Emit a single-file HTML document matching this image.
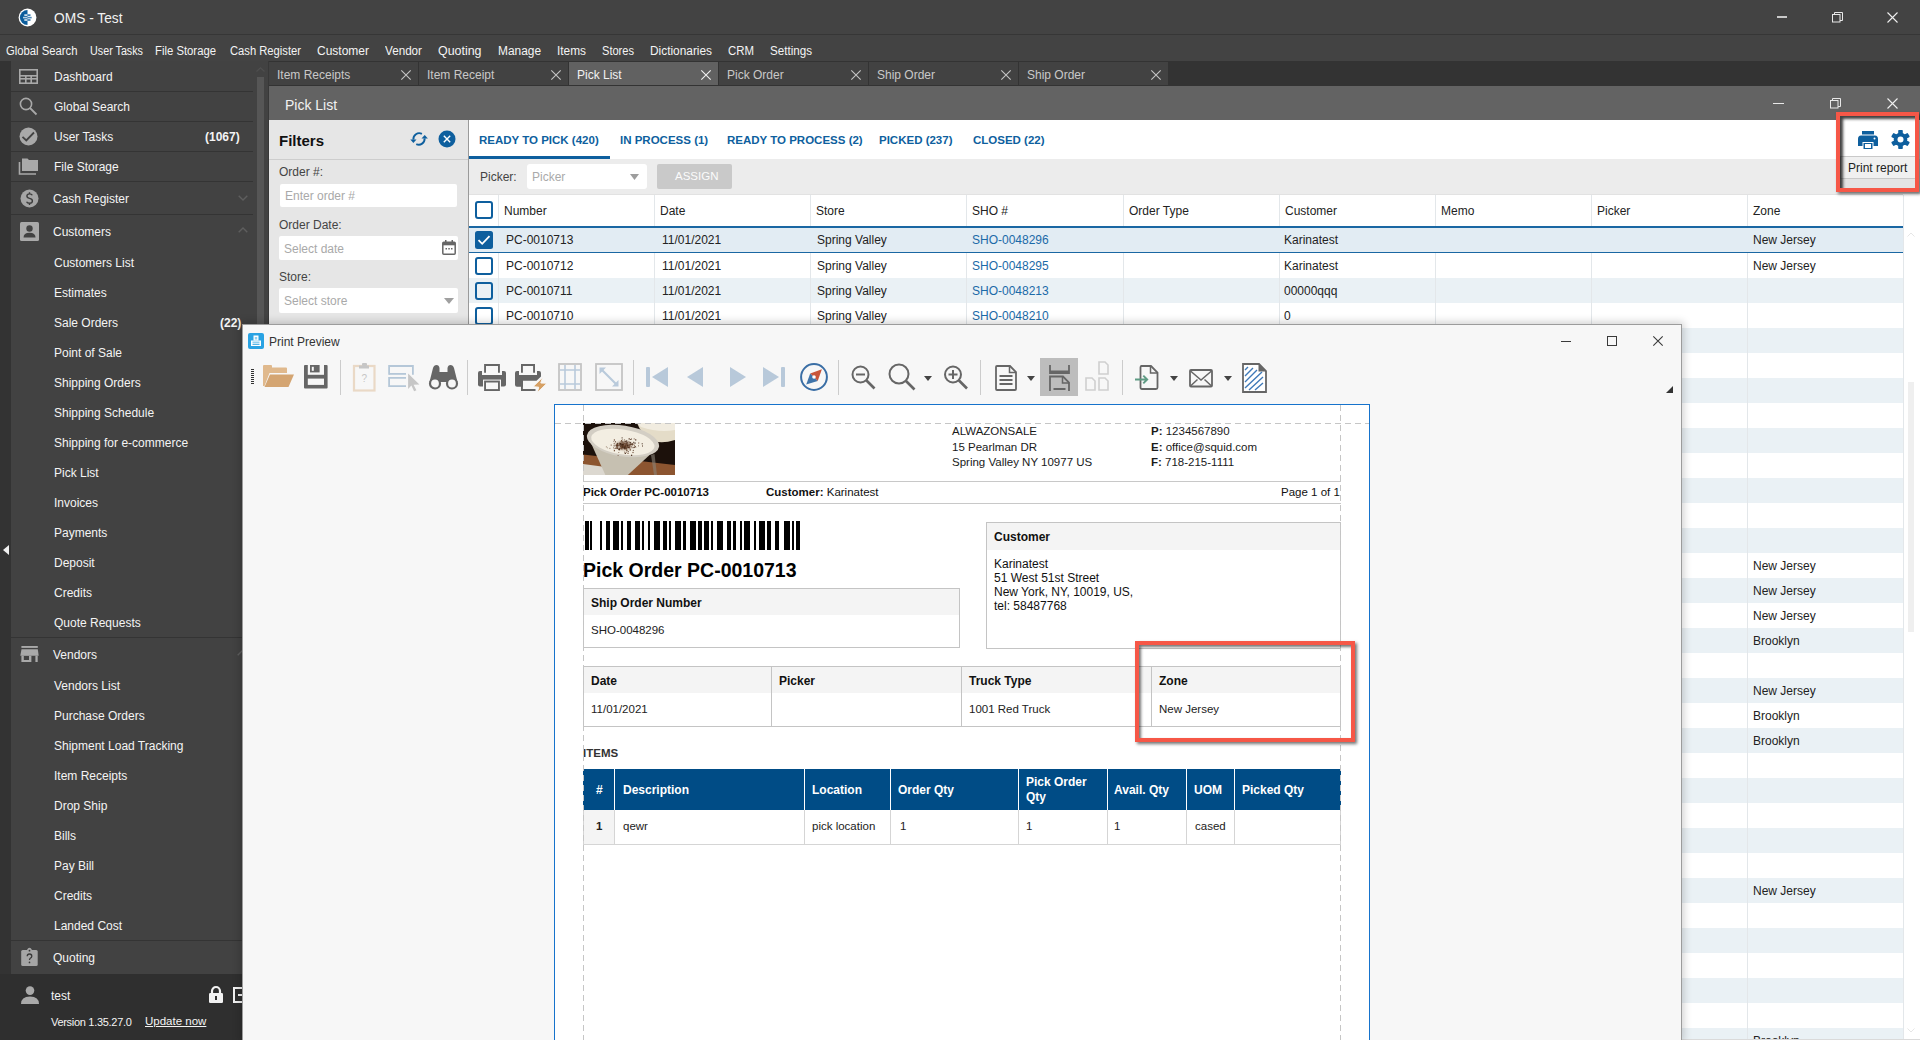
<!DOCTYPE html>
<html><head><meta charset="utf-8"><title>OMS - Test</title>
<style>
*{box-sizing:border-box;margin:0;padding:0}
html,body{width:1920px;height:1040px;overflow:hidden;background:#434343;font-family:"Liberation Sans",sans-serif;}
.a{position:absolute;white-space:nowrap}
.t{position:absolute;white-space:nowrap;line-height:1;transform-origin:0 0}
svg{position:absolute;overflow:visible}
</style></head><body>
<div class="a" style="left:0px;top:0px;width:1920px;height:34px;background:#434343;"></div>
<div class="a" style="left:0px;top:34px;width:1920px;height:1px;background:#363636;"></div>
<div class="a" style="left:0px;top:35px;width:1920px;height:26px;background:#434343;"></div>
<svg style="left:17.5px;top:7.5px" width="19" height="19" viewBox="0 0 19 19">
<circle cx="9.5" cy="9.5" r="8.9" fill="#fff"/>
<path d="M9.5 1.9 A7.6 7.6 0 0 0 9.5 17.1 Z" fill="#0b5d9c"/>
<rect x="6.3" y="6.4" width="3.2" height="1.4" fill="#fff"/><rect x="9.5" y="6.4" width="3" height="1.4" fill="#0b5d9c"/>
<rect x="5" y="8.8" width="4.5" height="1.6" fill="#b8d0e2"/><rect x="9.5" y="8.8" width="4.2" height="1.6" fill="#4a88b8"/>
<rect x="6.3" y="11.3" width="3.2" height="1.4" fill="#fff"/><rect x="9.5" y="11.3" width="3" height="1.4" fill="#0b5d9c"/>
</svg>
<div class="t" style="left:54px;top:11.2px;font-size:14.5px;color:#f2f2f2;font-weight:normal;transform:scaleX(0.9482);">OMS - Test</div>
<div class="a" style="left:1777px;top:16px;width:10px;height:2px;background:#c9c9c9;"></div>
<svg style="left:1832px;top:12px" width="11" height="11" viewBox="0 0 11 11"><rect x="0.5" y="2.5" width="7.5" height="7.5" fill="none" stroke="#e8e8e8"/><path d="M2.5 2.5V0.5H10.5V8.5H8" fill="none" stroke="#e8e8e8"/></svg>
<svg style="left:1887px;top:12px" width="11" height="11" viewBox="0 0 11 11"><path d="M0.5 0.5L10.5 10.5M10.5 0.5L0.5 10.5" stroke="#f0f0f0" stroke-width="1.1"/></svg>
<div class="t" style="left:6px;top:45.3px;font-size:12px;color:#f4f4f4;font-weight:normal;transform:scaleX(0.9403);">Global Search</div>
<div class="t" style="left:90px;top:45.3px;font-size:12px;color:#f4f4f4;font-weight:normal;transform:scaleX(0.8964);">User Tasks</div>
<div class="t" style="left:155px;top:45.3px;font-size:12px;color:#f4f4f4;font-weight:normal;transform:scaleX(0.9429);">File Storage</div>
<div class="t" style="left:230px;top:45.3px;font-size:12px;color:#f4f4f4;font-weight:normal;transform:scaleX(0.9339);">Cash Register</div>
<div class="t" style="left:317px;top:45.3px;font-size:12px;color:#f4f4f4;font-weight:normal;transform:scaleX(0.9998);">Customer</div>
<div class="t" style="left:385px;top:45.3px;font-size:12px;color:#f4f4f4;font-weight:normal;transform:scaleX(0.9729);">Vendor</div>
<div class="t" style="left:438px;top:45.3px;font-size:12px;color:#f4f4f4;font-weight:normal;transform:scaleX(1.0351);">Quoting</div>
<div class="t" style="left:498px;top:45.3px;font-size:12px;color:#f4f4f4;font-weight:normal;transform:scaleX(0.9917);">Manage</div>
<div class="t" style="left:557px;top:45.3px;font-size:12px;color:#f4f4f4;font-weight:normal;transform:scaleX(0.9885);">Items</div>
<div class="t" style="left:602px;top:45.3px;font-size:12px;color:#f4f4f4;font-weight:normal;transform:scaleX(0.9227);">Stores</div>
<div class="t" style="left:650px;top:45.3px;font-size:12px;color:#f4f4f4;font-weight:normal;transform:scaleX(0.9890);">Dictionaries</div>
<div class="t" style="left:728px;top:45.3px;font-size:12px;color:#f4f4f4;font-weight:normal;transform:scaleX(0.9514);">CRM</div>
<div class="t" style="left:770px;top:45.3px;font-size:12px;color:#f4f4f4;font-weight:normal;transform:scaleX(0.9687);">Settings</div>
<div class="a" style="left:0px;top:61px;width:269px;height:979px;background:#424242;"></div>
<div class="a" style="left:0px;top:61px;width:11px;height:979px;background:#333333;"></div>
<div class="a" style="left:257px;top:61px;width:11px;height:913px;background:#424242;"></div>
<div class="a" style="left:268px;top:61px;width:1px;height:979px;background:#383838;"></div>
<div class="a" style="left:257px;top:77px;width:7px;height:900px;background:#565656;"></div>
<svg style="left:256px;top:67px" width="9" height="5" viewBox="0 0 9 5"><path d="M0.5 4.5L4.5 0.8L8.5 4.5" fill="none" stroke="#4f4f4f" stroke-width="1.2"/></svg>
<div class="a" style="left:11px;top:91px;width:242px;height:1px;background:#343434;"></div>
<div class="a" style="left:11px;top:121px;width:242px;height:1px;background:#343434;"></div>
<div class="a" style="left:11px;top:151px;width:242px;height:1px;background:#343434;"></div>
<div class="a" style="left:11px;top:181px;width:242px;height:1px;background:#343434;"></div>
<div class="a" style="left:11px;top:214px;width:242px;height:1px;background:#343434;"></div>
<div class="a" style="left:11px;top:637px;width:242px;height:1px;background:#343434;"></div>
<div class="a" style="left:11px;top:940px;width:242px;height:1px;background:#343434;"></div>
<div class="t" style="left:54px;top:70.8px;font-size:12px;color:#f4f4f4;font-weight:normal;">Dashboard</div>
<div class="t" style="left:54px;top:100.8px;font-size:12px;color:#f4f4f4;font-weight:normal;">Global Search</div>
<div class="t" style="left:54px;top:130.8px;font-size:12px;color:#f4f4f4;font-weight:normal;">User Tasks</div>
<div class="t" style="left:54px;top:160.8px;font-size:12px;color:#f4f4f4;font-weight:normal;">File Storage</div>
<div class="t" style="left:53px;top:192.8px;font-size:12px;color:#f4f4f4;font-weight:normal;">Cash Register</div>
<div class="t" style="left:53px;top:225.8px;font-size:12px;color:#f4f4f4;font-weight:normal;">Customers</div>
<div class="t" style="left:53px;top:648.8px;font-size:12px;color:#f4f4f4;font-weight:normal;">Vendors</div>
<div class="t" style="left:53px;top:951.8px;font-size:12px;color:#f4f4f4;font-weight:normal;">Quoting</div>
<div class="t" style="left:205px;top:130.8px;font-size:12px;color:#f4f4f4;font-weight:bold;">(1067)</div>
<div class="t" style="left:54px;top:256.8px;font-size:12px;color:#f4f4f4;font-weight:normal;">Customers List</div>
<div class="t" style="left:54px;top:286.8px;font-size:12px;color:#f4f4f4;font-weight:normal;">Estimates</div>
<div class="t" style="left:54px;top:316.8px;font-size:12px;color:#f4f4f4;font-weight:normal;">Sale Orders</div>
<div class="t" style="left:54px;top:346.8px;font-size:12px;color:#f4f4f4;font-weight:normal;">Point of Sale</div>
<div class="t" style="left:54px;top:376.8px;font-size:12px;color:#f4f4f4;font-weight:normal;">Shipping Orders</div>
<div class="t" style="left:54px;top:406.8px;font-size:12px;color:#f4f4f4;font-weight:normal;">Shipping Schedule</div>
<div class="t" style="left:54px;top:436.8px;font-size:12px;color:#f4f4f4;font-weight:normal;">Shipping for e-commerce</div>
<div class="t" style="left:54px;top:466.8px;font-size:12px;color:#f4f4f4;font-weight:normal;">Pick List</div>
<div class="t" style="left:54px;top:496.8px;font-size:12px;color:#f4f4f4;font-weight:normal;">Invoices</div>
<div class="t" style="left:54px;top:526.8px;font-size:12px;color:#f4f4f4;font-weight:normal;">Payments</div>
<div class="t" style="left:54px;top:556.8px;font-size:12px;color:#f4f4f4;font-weight:normal;">Deposit</div>
<div class="t" style="left:54px;top:586.8px;font-size:12px;color:#f4f4f4;font-weight:normal;">Credits</div>
<div class="t" style="left:54px;top:616.8px;font-size:12px;color:#f4f4f4;font-weight:normal;">Quote Requests</div>
<div class="t" style="left:220px;top:316.8px;font-size:12px;color:#f4f4f4;font-weight:bold;">(22)</div>
<div class="t" style="left:54px;top:679.8px;font-size:12px;color:#f4f4f4;font-weight:normal;">Vendors List</div>
<div class="t" style="left:54px;top:709.8px;font-size:12px;color:#f4f4f4;font-weight:normal;">Purchase Orders</div>
<div class="t" style="left:54px;top:739.8px;font-size:12px;color:#f4f4f4;font-weight:normal;">Shipment Load Tracking</div>
<div class="t" style="left:54px;top:769.8px;font-size:12px;color:#f4f4f4;font-weight:normal;">Item Receipts</div>
<div class="t" style="left:54px;top:799.8px;font-size:12px;color:#f4f4f4;font-weight:normal;">Drop Ship</div>
<div class="t" style="left:54px;top:829.8px;font-size:12px;color:#f4f4f4;font-weight:normal;">Bills</div>
<div class="t" style="left:54px;top:859.8px;font-size:12px;color:#f4f4f4;font-weight:normal;">Pay Bill</div>
<div class="t" style="left:54px;top:889.8px;font-size:12px;color:#f4f4f4;font-weight:normal;">Credits</div>
<div class="t" style="left:54px;top:919.8px;font-size:12px;color:#f4f4f4;font-weight:normal;">Landed Cost</div>
<svg style="left:19px;top:69px" width="19" height="15" viewBox="0 0 19 15"><rect x="0.8" y="0.8" width="17.4" height="13.4" fill="none" stroke="#a9a9a9" stroke-width="1.6"/><rect x="0" y="6" width="19" height="1.6" fill="#a9a9a9"/><rect x="6" y="7" width="1.6" height="7" fill="#a9a9a9"/><rect x="11.4" y="7" width="1.6" height="7" fill="#a9a9a9"/><rect x="0" y="9" width="19" height="1.6" fill="#a9a9a9"/></svg>
<svg style="left:19px;top:97px" width="19" height="19" viewBox="0 0 19 19"><circle cx="7" cy="7" r="5.6" fill="none" stroke="#a9a9a9" stroke-width="1.6"/><path d="M11 11L17.5 17.5" stroke="#a9a9a9" stroke-width="1.8"/></svg>
<svg style="left:19px;top:127px" width="19" height="19" viewBox="0 0 19 19"><circle cx="9.5" cy="9.5" r="9" fill="#a9a9a9"/><path d="M3.5 9.8L7.3 13.4L15 5.5" fill="none" stroke="#424242" stroke-width="1.8"/></svg>
<svg style="left:19px;top:158px" width="20" height="17" viewBox="0 0 20 17"><path d="M3 0.5H8.5L10 2H19V13H3Z" fill="#a9a9a9"/><path d="M0.5 4V16H17" fill="none" stroke="#a9a9a9" stroke-width="1.6"/></svg>
<svg style="left:20px;top:188.5px" width="19" height="19" viewBox="0 0 19 19"><circle cx="9.5" cy="9.5" r="9" fill="#a5a5a5"/><path d="M12.3 6.3Q11.6 4.9 9.5 4.9Q6.9 4.9 6.9 7.1Q6.9 8.9 9.5 9.4Q12.4 9.9 12.4 12Q12.4 14.2 9.5 14.2Q7.3 14.2 6.6 12.7M9.5 3.2V4.9M9.5 14.2V16" fill="none" stroke="#3c3c3c" stroke-width="1.4"/></svg>
<svg style="left:20px;top:222px" width="19" height="19" viewBox="0 0 19 19"><rect x="0" y="0" width="19" height="19" rx="1.5" fill="#a9a9a9"/><circle cx="9.5" cy="6.5" r="3.2" fill="#424242"/><path d="M3.5 15.5Q3.5 10.8 9.5 10.8Q15.5 10.8 15.5 15.5Z" fill="#424242"/></svg>
<svg style="left:238px;top:195px" width="10" height="6" viewBox="0 0 10 6"><path d="M0.7 0.7L5 5L9.3 0.7" fill="none" stroke="#5e5e5e" stroke-width="1.4"/></svg>
<svg style="left:238px;top:227px" width="10" height="6" viewBox="0 0 10 6"><path d="M0.7 5.3L5 1L9.3 5.3" fill="none" stroke="#5e5e5e" stroke-width="1.4"/></svg>
<svg style="left:20px;top:645px" width="19" height="18" viewBox="0 0 19 18"><rect x="1.4" y="1" width="16.4" height="1.9" fill="#a9a9a9"/><path d="M1.5 4.2H17.8L18.7 10.7H0.3Z" fill="#a9a9a9"/><rect x="1.4" y="10.7" width="10" height="6.3" fill="#a9a9a9"/><rect x="3.8" y="11" width="5.2" height="4" fill="#424242"/><rect x="15.4" y="10.7" width="2.3" height="6.3" fill="#a9a9a9"/></svg>
<svg style="left:237px;top:650px" width="10" height="6" viewBox="0 0 10 6"><path d="M0.7 5.3L5 1L9.3 5.3" fill="none" stroke="#5e5e5e" stroke-width="1.4"/></svg>
<svg style="left:21px;top:947px" width="17" height="19" viewBox="0 0 17 19"><rect x="0.2" y="2.9" width="16.5" height="16" rx="1.5" fill="#a5a5a5"/><path d="M5.8 3.2Q7.2 0.8 8.5 0.8Q9.8 0.8 11.2 3.2Z" fill="#a5a5a5"/><circle cx="8.5" cy="3.7" r="0.9" fill="#3a3a3a"/><path d="M6.2 9.3Q6.2 7 8.5 7Q10.8 7 10.8 9.2Q10.8 10.5 9.3 11.3Q8.5 11.8 8.5 13" fill="none" stroke="#3a3a3a" stroke-width="1.3"/><circle cx="8.5" cy="15.4" r="0.85" fill="#3a3a3a"/></svg>
<div class="a" style="left:0px;top:974px;width:269px;height:66px;background:#2f2f2f;"></div>
<svg style="left:21px;top:986px" width="18" height="18" viewBox="0 0 18 18"><circle cx="9" cy="4.6" r="4.3" fill="#a9a9a9"/><path d="M0 18Q0 10.5 9 10.5Q18 10.5 18 18Z" fill="#a9a9a9"/></svg>
<div class="t" style="left:51px;top:989.8px;font-size:12px;color:#f4f4f4;font-weight:normal;">test</div>
<svg style="left:209px;top:986px" width="14" height="17" viewBox="0 0 14 17"><path d="M3 7.5V5A4 4 0 0 1 11 5V7.5" fill="none" stroke="#f2f2f2" stroke-width="2.2"/><rect x="0" y="7" width="14" height="10" rx="1.2" fill="#f2f2f2"/><rect x="6" y="10" width="2" height="4" fill="#2f2f2f"/></svg>
<svg style="left:233px;top:987px" width="10" height="16" viewBox="0 0 10 16"><path d="M9 1H1V15H9" fill="none" stroke="#f2f2f2" stroke-width="2"/><rect x="5" y="7" width="5" height="2" fill="#f2f2f2"/></svg>
<div class="t" style="left:51px;top:1016.7px;font-size:11px;color:#f4f4f4;font-weight:normal;letter-spacing:-0.3px">Version 1.35.27.0</div>
<div class="t" style="left:145px;top:1016.3px;font-size:11.5px;color:#f4f4f4;font-weight:normal;text-decoration:underline">Update now</div>
<svg style="left:3px;top:545px" width="6" height="10" viewBox="0 0 6 10"><path d="M6 0V10L0 5Z" fill="#f0f0f0"/></svg>
<div class="a" style="left:269px;top:61px;width:1651px;height:25px;background:#333333;"></div>
<div class="a" style="left:269px;top:62px;width:149px;height:23px;background:#424242;"></div>
<div class="t" style="left:277px;top:69.3px;font-size:12px;color:#c9c9c9;font-weight:normal;">Item Receipts</div>
<svg style="left:401px;top:70px" width="10" height="10" viewBox="0 0 10 10"><path d="M0.3 0.3L9.7 9.7M9.7 0.3L0.3 9.7" stroke="#c4c4c4" stroke-width="1.1"/></svg>
<div class="a" style="left:419px;top:62px;width:149px;height:23px;background:#424242;"></div>
<div class="t" style="left:427px;top:69.3px;font-size:12px;color:#c9c9c9;font-weight:normal;">Item Receipt</div>
<svg style="left:551px;top:70px" width="10" height="10" viewBox="0 0 10 10"><path d="M0.3 0.3L9.7 9.7M9.7 0.3L0.3 9.7" stroke="#c4c4c4" stroke-width="1.1"/></svg>
<div class="a" style="left:569px;top:62px;width:149px;height:23px;background:#616161;"></div>
<div class="t" style="left:577px;top:69.3px;font-size:12px;color:#f2f2f2;font-weight:normal;">Pick List</div>
<svg style="left:701px;top:70px" width="10" height="10" viewBox="0 0 10 10"><path d="M0.3 0.3L9.7 9.7M9.7 0.3L0.3 9.7" stroke="#f0f0f0" stroke-width="1.1"/></svg>
<div class="a" style="left:719px;top:62px;width:149px;height:23px;background:#424242;"></div>
<div class="t" style="left:727px;top:69.3px;font-size:12px;color:#c9c9c9;font-weight:normal;">Pick Order</div>
<svg style="left:851px;top:70px" width="10" height="10" viewBox="0 0 10 10"><path d="M0.3 0.3L9.7 9.7M9.7 0.3L0.3 9.7" stroke="#c4c4c4" stroke-width="1.1"/></svg>
<div class="a" style="left:869px;top:62px;width:149px;height:23px;background:#424242;"></div>
<div class="t" style="left:877px;top:69.3px;font-size:12px;color:#c9c9c9;font-weight:normal;">Ship Order</div>
<svg style="left:1001px;top:70px" width="10" height="10" viewBox="0 0 10 10"><path d="M0.3 0.3L9.7 9.7M9.7 0.3L0.3 9.7" stroke="#c4c4c4" stroke-width="1.1"/></svg>
<div class="a" style="left:1019px;top:62px;width:149px;height:23px;background:#424242;"></div>
<div class="t" style="left:1027px;top:69.3px;font-size:12px;color:#c9c9c9;font-weight:normal;">Ship Order</div>
<svg style="left:1151px;top:70px" width="10" height="10" viewBox="0 0 10 10"><path d="M0.3 0.3L9.7 9.7M9.7 0.3L0.3 9.7" stroke="#c4c4c4" stroke-width="1.1"/></svg>
<div class="a" style="left:269px;top:86px;width:1651px;height:34px;background:#636363;"></div>
<div class="t" style="left:285px;top:98.1px;font-size:14px;color:#f2f2f2;font-weight:normal;">Pick List</div>
<div class="a" style="left:1773px;top:103px;width:11px;height:1.2px;background:#e8e8e8;"></div>
<svg style="left:1830px;top:98px" width="11" height="11" viewBox="0 0 11 11"><rect x="0.5" y="2.5" width="7.5" height="7.5" fill="none" stroke="#e8e8e8"/><path d="M2.5 2.5V0.5H10.5V8.5H8" fill="none" stroke="#e8e8e8"/></svg>
<svg style="left:1887px;top:98px" width="11" height="11" viewBox="0 0 11 11"><path d="M0.5 0.5L10.5 10.5M10.5 0.5L0.5 10.5" stroke="#f0f0f0" stroke-width="1.1"/></svg>
<div class="a" style="left:269px;top:120px;width:199px;height:920px;background:#e6e6e6;"></div>
<div class="a" style="left:468px;top:120px;width:1px;height:920px;background:#9a9a9a;"></div>
<div class="a" style="left:269px;top:159px;width:199px;height:1px;background:#cdcdcd;"></div>
<div class="t" style="left:279px;top:132.8px;font-size:15px;color:#111;font-weight:bold;">Filters</div>
<svg style="left:410px;top:131px" width="18" height="17" viewBox="0 0 18 17"><path d="M11.9 2.9A5.8 5.8 0 0 0 3.4 8.6" fill="none" stroke="#0e5f9e" stroke-width="1.9"/><path d="M0.3 8.6H6.5L3.4 12.1Z" fill="#0e5f9e"/><path d="M6.3 13.1A5.8 5.8 0 0 0 14.6 7.4" fill="none" stroke="#0e5f9e" stroke-width="1.9"/><path d="M11.5 7.4H17.9L14.7 3.9Z" fill="#0e5f9e"/></svg>
<svg style="left:438px;top:130px" width="18" height="18" viewBox="0 0 18 18"><circle cx="9" cy="9" r="8.5" fill="#0e5f9e"/><path d="M5.8 5.8L12.2 12.2M12.2 5.8L5.8 12.2" stroke="#fff" stroke-width="1.4"/></svg>
<div class="t" style="left:279px;top:165.8px;font-size:12px;color:#444;font-weight:normal;">Order #:</div>
<div class="a" style="left:280px;top:184px;width:177px;height:23px;background:#fff;border-radius:2px"></div>
<div class="t" style="left:285px;top:189.8px;font-size:12px;color:#a9a9a9;font-weight:normal;">Enter order #</div>
<div class="t" style="left:279px;top:218.8px;font-size:12px;color:#444;font-weight:normal;">Order Date:</div>
<div class="a" style="left:279px;top:236px;width:179px;height:24px;background:#fff;border-radius:2px"></div>
<div class="t" style="left:284px;top:242.8px;font-size:12px;color:#a9a9a9;font-weight:normal;">Select date</div>
<svg style="left:442px;top:240px" width="14" height="15" viewBox="0 0 14 15"><rect x="0.8" y="2.3" width="12.4" height="11.9" rx="1" fill="none" stroke="#666" stroke-width="1.5"/><rect x="0.8" y="2.3" width="12.4" height="3" fill="#666"/><rect x="3" y="0" width="1.5" height="3" fill="#666"/><rect x="9.5" y="0" width="1.5" height="3" fill="#666"/><rect x="3.5" y="8" width="1.5" height="1.5" fill="#666"/><rect x="6.3" y="8" width="1.5" height="1.5" fill="#666"/><rect x="9" y="8" width="1.5" height="1.5" fill="#666"/></svg>
<div class="t" style="left:279px;top:270.8px;font-size:12px;color:#444;font-weight:normal;">Store:</div>
<div class="a" style="left:279px;top:288px;width:179px;height:25px;background:#fff;border-radius:2px"></div>
<div class="t" style="left:284px;top:294.8px;font-size:12px;color:#a9a9a9;font-weight:normal;">Select store</div>
<svg style="left:444px;top:298px" width="10" height="6" viewBox="0 0 10 6"><path d="M0 0H10L5 6Z" fill="#a0a0a0"/></svg>
<div class="a" style="left:469px;top:120px;width:1451px;height:39px;background:#ffffff;"></div>
<div class="t" style="left:479px;top:134.8px;font-size:11.5px;color:#0e5f9e;font-weight:bold;">READY TO PICK (420)</div>
<div class="t" style="left:620px;top:134.8px;font-size:11.5px;color:#0e5f9e;font-weight:bold;">IN PROCESS (1)</div>
<div class="t" style="left:727px;top:134.8px;font-size:11.5px;color:#0e5f9e;font-weight:bold;">READY TO PROCESS (2)</div>
<div class="t" style="left:879px;top:134.8px;font-size:11.5px;color:#0e5f9e;font-weight:bold;">PICKED (237)</div>
<div class="t" style="left:973px;top:134.8px;font-size:11.5px;color:#0e5f9e;font-weight:bold;">CLOSED (22)</div>
<div class="a" style="left:469px;top:156px;width:141px;height:3px;background:#0e5f9e;"></div>
<div class="a" style="left:469px;top:159px;width:1451px;height:35px;background:#ececec;"></div>
<div class="t" style="left:480px;top:170.8px;font-size:12px;color:#444;font-weight:normal;">Picker:</div>
<div class="a" style="left:527px;top:164px;width:120px;height:25px;background:#fff;border-radius:3px"></div>
<div class="t" style="left:532px;top:170.8px;font-size:12px;color:#aaa;font-weight:normal;">Picker</div>
<svg style="left:630px;top:174px" width="9" height="6" viewBox="0 0 9 6"><path d="M0 0H9L4.5 6Z" fill="#9d9d9d"/></svg>
<div class="a" style="left:657px;top:164px;width:75px;height:25px;background:#c9c9c9;border-radius:2px"></div>
<div class="t" style="left:675px;top:171.3px;font-size:11.5px;color:#fbfbfb;font-weight:normal;">ASSIGN</div>
<div class="a" style="left:469px;top:194px;width:1451px;height:32px;background:#ffffff;"></div>
<div class="a" style="left:469px;top:194px;width:1434px;height:1px;background:#e2e2e2;"></div>
<div class="t" style="left:504px;top:204.8px;font-size:12px;color:#222;font-weight:normal;">Number</div>
<div class="t" style="left:660px;top:204.8px;font-size:12px;color:#222;font-weight:normal;">Date</div>
<div class="t" style="left:816px;top:204.8px;font-size:12px;color:#222;font-weight:normal;">Store</div>
<div class="t" style="left:972px;top:204.8px;font-size:12px;color:#222;font-weight:normal;">SHO #</div>
<div class="t" style="left:1129px;top:204.8px;font-size:12px;color:#222;font-weight:normal;">Order Type</div>
<div class="t" style="left:1285px;top:204.8px;font-size:12px;color:#222;font-weight:normal;">Customer</div>
<div class="t" style="left:1441px;top:204.8px;font-size:12px;color:#222;font-weight:normal;">Memo</div>
<div class="t" style="left:1597px;top:204.8px;font-size:12px;color:#222;font-weight:normal;">Picker</div>
<div class="t" style="left:1753px;top:204.8px;font-size:12px;color:#222;font-weight:normal;">Zone</div>
<div class="a" style="left:469px;top:226px;width:1451px;height:814px;background:#ffffff;"></div>
<div class="a" style="left:469px;top:278px;width:1434px;height:25px;background:#eaf1f5;"></div>
<div class="a" style="left:469px;top:328px;width:1434px;height:25px;background:#eaf1f5;"></div>
<div class="a" style="left:469px;top:378px;width:1434px;height:25px;background:#eaf1f5;"></div>
<div class="a" style="left:469px;top:428px;width:1434px;height:25px;background:#eaf1f5;"></div>
<div class="a" style="left:469px;top:478px;width:1434px;height:25px;background:#eaf1f5;"></div>
<div class="a" style="left:469px;top:528px;width:1434px;height:25px;background:#eaf1f5;"></div>
<div class="a" style="left:469px;top:578px;width:1434px;height:25px;background:#eaf1f5;"></div>
<div class="a" style="left:469px;top:628px;width:1434px;height:25px;background:#eaf1f5;"></div>
<div class="a" style="left:469px;top:678px;width:1434px;height:25px;background:#eaf1f5;"></div>
<div class="a" style="left:469px;top:728px;width:1434px;height:25px;background:#eaf1f5;"></div>
<div class="a" style="left:469px;top:778px;width:1434px;height:25px;background:#eaf1f5;"></div>
<div class="a" style="left:469px;top:828px;width:1434px;height:25px;background:#eaf1f5;"></div>
<div class="a" style="left:469px;top:878px;width:1434px;height:25px;background:#eaf1f5;"></div>
<div class="a" style="left:469px;top:928px;width:1434px;height:25px;background:#eaf1f5;"></div>
<div class="a" style="left:469px;top:978px;width:1434px;height:25px;background:#eaf1f5;"></div>
<div class="a" style="left:469px;top:1028px;width:1434px;height:25px;background:#eaf1f5;"></div>
<div class="a" style="left:498px;top:195px;width:1px;height:845px;background:#e3e7ea;"></div>
<div class="a" style="left:654px;top:195px;width:1px;height:845px;background:#e3e7ea;"></div>
<div class="a" style="left:810px;top:195px;width:1px;height:845px;background:#e3e7ea;"></div>
<div class="a" style="left:966px;top:195px;width:1px;height:845px;background:#e3e7ea;"></div>
<div class="a" style="left:1123px;top:195px;width:1px;height:845px;background:#e3e7ea;"></div>
<div class="a" style="left:1279px;top:195px;width:1px;height:845px;background:#e3e7ea;"></div>
<div class="a" style="left:1435px;top:195px;width:1px;height:845px;background:#e3e7ea;"></div>
<div class="a" style="left:1591px;top:195px;width:1px;height:845px;background:#e3e7ea;"></div>
<div class="a" style="left:1747px;top:195px;width:1px;height:845px;background:#e3e7ea;"></div>
<div class="a" style="left:1903px;top:195px;width:1px;height:845px;background:#e3e7ea;"></div>
<div class="a" style="left:469px;top:226px;width:1434px;height:27px;background:#e2ecf3;"></div>
<div class="a" style="left:469px;top:226px;width:1434px;height:1.5px;background:#1a67a3;"></div>
<div class="a" style="left:469px;top:251.5px;width:1434px;height:1.5px;background:#1a67a3;"></div>
<svg style="left:475px;top:201px" width="18" height="18" viewBox="0 0 18 18"><rect x="1" y="1" width="16" height="16" rx="2" fill="none" stroke="#0e5f9e" stroke-width="2"/></svg>
<svg style="left:475px;top:231px" width="18" height="18" viewBox="0 0 18 18"><rect x="0" y="0" width="18" height="18" rx="2.5" fill="#0e5f9e"/><path d="M3.5 9.2L7.2 12.8L14.5 5.2" fill="none" stroke="#fff" stroke-width="1.8"/></svg>
<svg style="left:475px;top:257px" width="18" height="18" viewBox="0 0 18 18"><rect x="1" y="1" width="16" height="16" rx="2" fill="none" stroke="#0e5f9e" stroke-width="2"/></svg>
<svg style="left:475px;top:282px" width="18" height="18" viewBox="0 0 18 18"><rect x="1" y="1" width="16" height="16" rx="2" fill="none" stroke="#0e5f9e" stroke-width="2"/></svg>
<svg style="left:475px;top:307px" width="18" height="18" viewBox="0 0 18 18"><rect x="1" y="1" width="16" height="16" rx="2" fill="none" stroke="#0e5f9e" stroke-width="2"/></svg>
<div class="t" style="left:506px;top:234.3px;font-size:12px;color:#222;font-weight:normal;">PC-0010713</div>
<div class="t" style="left:662px;top:234.3px;font-size:12px;color:#222;font-weight:normal;">11/01/2021</div>
<div class="t" style="left:817px;top:234.3px;font-size:12px;color:#222;font-weight:normal;">Spring Valley</div>
<div class="t" style="left:972px;top:234.3px;font-size:12px;color:#1b6aa8;font-weight:normal;">SHO-0048296</div>
<div class="t" style="left:1284px;top:234.3px;font-size:12px;color:#222;font-weight:normal;">Karinatest</div>
<div class="t" style="left:1753px;top:234.3px;font-size:12px;color:#222;font-weight:normal;">New Jersey</div>
<div class="t" style="left:506px;top:260.3px;font-size:12px;color:#222;font-weight:normal;">PC-0010712</div>
<div class="t" style="left:662px;top:260.3px;font-size:12px;color:#222;font-weight:normal;">11/01/2021</div>
<div class="t" style="left:817px;top:260.3px;font-size:12px;color:#222;font-weight:normal;">Spring Valley</div>
<div class="t" style="left:972px;top:260.3px;font-size:12px;color:#1b6aa8;font-weight:normal;">SHO-0048295</div>
<div class="t" style="left:1284px;top:260.3px;font-size:12px;color:#222;font-weight:normal;">Karinatest</div>
<div class="t" style="left:1753px;top:260.3px;font-size:12px;color:#222;font-weight:normal;">New Jersey</div>
<div class="t" style="left:506px;top:285.3px;font-size:12px;color:#222;font-weight:normal;">PC-0010711</div>
<div class="t" style="left:662px;top:285.3px;font-size:12px;color:#222;font-weight:normal;">11/01/2021</div>
<div class="t" style="left:817px;top:285.3px;font-size:12px;color:#222;font-weight:normal;">Spring Valley</div>
<div class="t" style="left:972px;top:285.3px;font-size:12px;color:#1b6aa8;font-weight:normal;">SHO-0048213</div>
<div class="t" style="left:1284px;top:285.3px;font-size:12px;color:#222;font-weight:normal;">00000qqq</div>
<div class="t" style="left:506px;top:310.3px;font-size:12px;color:#222;font-weight:normal;">PC-0010710</div>
<div class="t" style="left:662px;top:310.3px;font-size:12px;color:#222;font-weight:normal;">11/01/2021</div>
<div class="t" style="left:817px;top:310.3px;font-size:12px;color:#222;font-weight:normal;">Spring Valley</div>
<div class="t" style="left:972px;top:310.3px;font-size:12px;color:#1b6aa8;font-weight:normal;">SHO-0048210</div>
<div class="t" style="left:1284px;top:310.3px;font-size:12px;color:#222;font-weight:normal;">0</div>
<div class="t" style="left:1753px;top:560.3px;font-size:12px;color:#222;font-weight:normal;">New Jersey</div>
<div class="t" style="left:1753px;top:585.3px;font-size:12px;color:#222;font-weight:normal;">New Jersey</div>
<div class="t" style="left:1753px;top:610.3px;font-size:12px;color:#222;font-weight:normal;">New Jersey</div>
<div class="t" style="left:1753px;top:635.3px;font-size:12px;color:#222;font-weight:normal;">Brooklyn</div>
<div class="t" style="left:1753px;top:685.3px;font-size:12px;color:#222;font-weight:normal;">New Jersey</div>
<div class="t" style="left:1753px;top:710.3px;font-size:12px;color:#222;font-weight:normal;">Brooklyn</div>
<div class="t" style="left:1753px;top:735.3px;font-size:12px;color:#222;font-weight:normal;">Brooklyn</div>
<div class="t" style="left:1753px;top:885.3px;font-size:12px;color:#222;font-weight:normal;">New Jersey</div>
<div class="t" style="left:1753px;top:1035.3px;font-size:12px;color:#222;font-weight:normal;">Brooklyn</div>
<div class="a" style="left:469px;top:1039px;width:1451px;height:1px;background:#dadada;"></div>
<svg style="left:1907px;top:232px" width="8" height="5" viewBox="0 0 8 5"><path d="M0.5 4.5L4 1L7.5 4.5" fill="none" stroke="#e6e6e6" stroke-width="1"/></svg>
<svg style="left:1907px;top:1028px" width="8" height="5" viewBox="0 0 8 5"><path d="M0.5 0.5L4 4L7.5 0.5" fill="none" stroke="#e6e6e6" stroke-width="1"/></svg>
<div class="a" style="left:1908px;top:382px;width:6px;height:250px;background:#efefef;"></div>
<div class="a" style="left:242px;top:324px;width:1440px;height:716px;background:transparent;box-shadow:0 0 8px 2px rgba(0,0,0,0.18)"></div>
<div class="a" style="left:242px;top:324px;width:1440px;height:716px;background:#f7f7f7;border:1px solid #9c9c9c;border-bottom:none"></div>
<svg style="left:248px;top:333px" width="16" height="16" viewBox="0 0 16 16"><rect x="0" y="0" width="16" height="16" rx="2" fill="#2aa3e3"/><rect x="5.5" y="2.5" width="5" height="5" fill="#fff"/><rect x="6.8" y="4" width="2.4" height="2.5" fill="#8fd0f0"/><path d="M3 7.5H13V13H3Z" fill="#fff"/><rect x="4.5" y="8.5" width="7" height="2" fill="#8fd0f0"/><rect x="4.5" y="11" width="7" height="0.8" fill="#2aa3e3"/></svg>
<div class="t" style="left:269px;top:335.8px;font-size:12px;color:#333;font-weight:normal;">Print Preview</div>
<div class="a" style="left:1561px;top:341px;width:10px;height:1px;background:#3a3a3a;"></div>
<svg style="left:1607px;top:336px" width="10" height="10" viewBox="0 0 10 10"><rect x="0.5" y="0.5" width="9" height="9" fill="none" stroke="#3a3a3a" stroke-width="1"/></svg>
<svg style="left:1653px;top:336px" width="10" height="10" viewBox="0 0 10 10"><path d="M0.3 0.3L9.7 9.7M9.7 0.3L0.3 9.7" stroke="#3a3a3a" stroke-width="1.1"/></svg>
<svg style="left:1666px;top:386px" width="7" height="7" viewBox="0 0 7 7"><path d="M7 0V7H0Z" fill="#333"/></svg>
<div class="a" style="left:251px;top:369px;width:3px;height:1px;background:#333;"></div>
<div class="a" style="left:251px;top:371px;width:3px;height:1px;background:#333;"></div>
<div class="a" style="left:251px;top:373px;width:3px;height:1px;background:#333;"></div>
<div class="a" style="left:251px;top:375px;width:3px;height:1px;background:#333;"></div>
<div class="a" style="left:251px;top:377px;width:3px;height:1px;background:#333;"></div>
<div class="a" style="left:251px;top:379px;width:3px;height:1px;background:#333;"></div>
<div class="a" style="left:251px;top:381px;width:3px;height:1px;background:#333;"></div>
<div class="a" style="left:251px;top:383px;width:3px;height:1px;background:#333;"></div>
<div class="a" style="left:340px;top:360px;width:1px;height:35px;background:#cccccc;"></div>
<div class="a" style="left:467px;top:360px;width:1px;height:35px;background:#cccccc;"></div>
<div class="a" style="left:633px;top:360px;width:1px;height:35px;background:#cccccc;"></div>
<div class="a" style="left:838px;top:360px;width:1px;height:35px;background:#cccccc;"></div>
<div class="a" style="left:980px;top:360px;width:1px;height:35px;background:#cccccc;"></div>
<div class="a" style="left:1122px;top:360px;width:1px;height:35px;background:#cccccc;"></div>
<svg style="left:263px;top:365px" width="31" height="23" viewBox="0 0 31 23"><path d="M0 21V1Q0 0 1 0H8Q9 0 9 1V2.5H23Q24 2.5 24 3.5V8H6.5L1.5 21Z" fill="#e0b98d"/><path d="M7 9.5H31L25.5 22H1.5Z" fill="#d4a572"/></svg>
<svg style="left:304px;top:365px" width="24" height="24" viewBox="0 0 24 24"><rect x="0" y="0" width="23.6" height="23.4" rx="1" fill="#666666"/><rect x="3.8" y="0" width="16.2" height="9.8" fill="#f7f7f7"/><rect x="6" y="0" width="9.6" height="7.4" fill="#666666"/><rect x="7.8" y="1.8" width="2" height="4" fill="#f7f7f7"/><rect x="3.8" y="13.6" width="16.2" height="6.3" fill="#f7f7f7"/></svg>
<svg style="left:353px;top:363px" width="23" height="29" viewBox="0 0 23 29"><rect x="1" y="3" width="20.5" height="24.5" fill="none" stroke="#ead9c6" stroke-width="2.2"/><rect x="6" y="2.5" width="10" height="3" fill="#c6c6c6"/><rect x="9" y="0" width="5" height="3" rx="1" fill="#c6c6c6"/><text x="11.3" y="19" font-family="Liberation Sans" font-size="10" text-anchor="middle" fill="#c6c6c6">?</text></svg>
<svg style="left:388px;top:365px" width="33" height="27" viewBox="0 0 33 27"><g fill="none" stroke="#b5c7d8" stroke-width="1.8"><path d="M1.1 9.8V1H24.9V9.8"/><path d="M1.1 8.9H18"/><path d="M18 12.9H1.1V21.1H18"/></g><path d="M20.1 8.5L31.4 19.5L25.6 19.7L28.4 25.2L26.1 26.2L23.4 20.6L20.1 24Z" fill="#c6c6c6"/></svg>
<svg style="left:429px;top:365px" width="29" height="25" viewBox="0 0 29 25"><path d="M4 3Q5 0 7.5 0Q10 0 10.5 3V7H18.5V3Q19 0 21.5 0Q24 0 25 3L28.5 17H0.5Z" fill="#666666"/><circle cx="6" cy="18.5" r="5" fill="#f7f7f7" stroke="#666666" stroke-width="2.2"/><circle cx="23" cy="18.5" r="5" fill="#f7f7f7" stroke="#666666" stroke-width="2.2"/><rect x="10.5" y="7" width="8" height="6" fill="#666666"/></svg>
<svg style="left:478px;top:363px" width="28" height="29" viewBox="0 0 28 29"><rect x="0" y="8" width="28" height="15.6" rx="2" fill="#666666"/><rect x="4" y="6" width="20" height="6" fill="#f7f7f7"/><path d="M7.05 9.8V1.95H20.95V9.8" fill="none" stroke="#666666" stroke-width="1.9"/><rect x="5" y="16.6" width="18" height="12.4" fill="#f7f7f7"/><rect x="7.05" y="18.55" width="13.9" height="8.5" fill="#f7f7f7" stroke="#666666" stroke-width="1.9"/></svg>
<svg style="left:515px;top:363px" width="33" height="31" viewBox="0 0 33 31"><path d="M0 10Q0 8 2 8H4V12H22V8H24Q26 8 26 10V13.5L21.5 17.8H8V23.8H2Q0 23.8 0 21.8Z" fill="#666666"/><path d="M6.95 9.8V1.95H19.05V9.8" fill="none" stroke="#666666" stroke-width="1.9"/><path d="M6.95 18V27.05H20.5" fill="none" stroke="#666666" stroke-width="1.9"/><path d="M27.7 14.2L18 23.7L23.7 24.2L22.3 29.8L32 20.2L25.8 20Z" fill="#d6a064" stroke="#f7f7f7" stroke-width="1"/></svg>
<svg style="left:558px;top:363px" width="24" height="28" viewBox="0 0 24 28"><rect x="1" y="1" width="22" height="26" fill="none" stroke="#c4c4c4" stroke-width="1.8"/><path d="M7 2V26M17 2V26M2 7H22M2 21H22" stroke="#b9cadb" stroke-width="1.6"/></svg>
<svg style="left:595px;top:363px" width="28" height="28" viewBox="0 0 28 28"><rect x="1" y="1" width="26" height="26" fill="none" stroke="#c4c4c4" stroke-width="1.8"/><path d="M6 6L22 22" stroke="#b9cadb" stroke-width="2.2"/><path d="M4.5 4.5H11L4.5 11Z M23.5 23.5H17L23.5 17Z" fill="#b9cadb"/></svg>
<svg style="left:646px;top:367px" width="23" height="21" viewBox="0 0 23 21"><rect x="0" y="0" width="4" height="20" rx="1" fill="#b8c9da"/><path d="M22 0V20L6 10Z" fill="#b8c9da"/></svg>
<svg style="left:687px;top:367px" width="17" height="21" viewBox="0 0 17 21"><path d="M16 0V20L0 10Z" fill="#b8c9da"/></svg>
<svg style="left:730px;top:367px" width="17" height="21" viewBox="0 0 17 21"><path d="M0 0V20L16 10Z" fill="#b8c9da"/></svg>
<svg style="left:763px;top:367px" width="23" height="21" viewBox="0 0 23 21"><path d="M0 0V20L16 10Z" fill="#b8c9da"/><rect x="18" y="0" width="4" height="20" rx="1" fill="#b8c9da"/></svg>
<svg style="left:800px;top:363px" width="29" height="29" viewBox="0 0 29 29"><circle cx="14" cy="14" r="12.9" fill="none" stroke="#3a6ea5" stroke-width="2"/><path d="M21.9 6.2L10.2 10.4L17.7 17.9Z" fill="#c9553a"/><path d="M6.2 21.5L10.2 10.4L17.7 17.9Z" fill="#3f74aa"/><circle cx="14" cy="14" r="1.8" fill="#fff"/></svg>
<svg style="left:851px;top:365px" width="25" height="25" viewBox="0 0 25 25"><circle cx="9.5" cy="9.5" r="8" fill="none" stroke="#666666" stroke-width="2"/><path d="M5 9.5H14" stroke="#666666" stroke-width="2"/><path d="M15 15L23.5 23.5" stroke="#666666" stroke-width="2.6"/></svg>
<svg style="left:888px;top:363px" width="28" height="28" viewBox="0 0 28 28"><circle cx="11" cy="11" r="9.5" fill="none" stroke="#666666" stroke-width="2"/><path d="M18 18L26.5 26.5" stroke="#666666" stroke-width="2.6"/></svg>
<svg style="left:924px;top:376px" width="8" height="5" viewBox="0 0 8 5"><path d="M0 0H8L4 5Z" fill="#444"/></svg>
<svg style="left:944px;top:365px" width="25" height="25" viewBox="0 0 25 25"><circle cx="9" cy="9.5" r="8" fill="none" stroke="#666666" stroke-width="2"/><path d="M4.5 9.5H13.5M9 5V14" stroke="#666666" stroke-width="2"/><path d="M14.5 15L23 23.5" stroke="#666666" stroke-width="2.6"/></svg>
<svg style="left:995px;top:365px" width="22" height="26" viewBox="0 0 22 26"><path d="M2 1H15L21 7V24Q21 25 20 25H2Q1 25 1 24V2Q1 1 2 1Z" fill="none" stroke="#666666" stroke-width="1.8"/><path d="M14.5 1V7.5H21" fill="none" stroke="#666666" stroke-width="1.5"/><path d="M4.5 11H17.5M4.5 15H17.5M4.5 19H17.5" stroke="#666666" stroke-width="1.8"/></svg>
<svg style="left:1027px;top:376px" width="8" height="5" viewBox="0 0 8 5"><path d="M0 0H8L4 5Z" fill="#444"/></svg>
<div class="a" style="left:1040px;top:358px;width:38px;height:38px;background:#bdbdbd;"></div>
<svg style="left:1049px;top:365px" width="21" height="26" viewBox="0 0 21 26"><path d="M1 0V8H20V0M1 6.5H20" fill="none" stroke="#666666" stroke-width="1.8"/><path d="M1 26V11.5H14L20 17.5V26M4.5 24H16.5" fill="none" stroke="#666666" stroke-width="1.8"/><path d="M13.5 11.5V18H20" fill="none" stroke="#666666" stroke-width="1.5"/></svg>
<svg style="left:1085px;top:361px" width="25" height="31" viewBox="0 0 25 31"><g fill="none" stroke="#cfcfcf" stroke-width="1.6"><path d="M14 1H20L23 4V13H14Z"/><path d="M1 17H7L10 20V29H1Z"/><path d="M14 17H20L23 20V29H14Z"/></g></svg>
<svg style="left:1135px;top:365px" width="24" height="25" viewBox="0 0 24 25"><path d="M5.5 1H16L22.5 7.5V22.5Q22.5 24 21 24H7Q5.5 24 5.5 22.5V2.5Q5.5 1 7 1Z" fill="none" stroke="#666666" stroke-width="1.8"/><path d="M15.5 1V8H22.5" fill="none" stroke="#666666" stroke-width="1.5"/><path d="M0 14.5H12M8.3 10.6L12.2 14.5L8.3 18.4" fill="none" stroke="#5f9b84" stroke-width="1.9"/></svg>
<svg style="left:1170px;top:376px" width="8" height="5" viewBox="0 0 8 5"><path d="M0 0H8L4 5Z" fill="#444"/></svg>
<svg style="left:1189px;top:369px" width="24" height="19" viewBox="0 0 24 19"><rect x="1" y="1" width="22" height="16.5" rx="1" fill="none" stroke="#666666" stroke-width="1.8"/><path d="M1.5 2L12 11L22.5 2M1.5 17L8.5 10.5M22.5 17L15.5 10.5" fill="none" stroke="#666666" stroke-width="1.5"/></svg>
<svg style="left:1224px;top:376px" width="8" height="5" viewBox="0 0 8 5"><path d="M0 0H8L4 5Z" fill="#444"/></svg>
<svg style="left:1242px;top:363px" width="25" height="30" viewBox="0 0 25 30"><path d="M1 1H17L24 8V29H1Z" fill="#fff" stroke="#666666" stroke-width="1.8"/><path d="M16.5 1V8.5H24Z" fill="#666666"/><g stroke="#3f79b8" stroke-width="1.4"><path d="M3 7L6 4M3 13L11 5M3 19L15 7M3 25L20 9M7 27L21 14M13 27L21 20"/></g></svg>
<div class="a" style="left:554px;top:404px;width:816px;height:636px;background:#ffffff;border:1px solid #1673cc;border-bottom:none"></div>
<svg style="left:583px;top:423px" width="92" height="52" viewBox="0 0 92 52">
<defs><clipPath id="imc"><rect width="92" height="52"/></clipPath><radialGradient id="spk" cx="0.5" cy="0.5" r="0.5"><stop offset="0" stop-color="#4a2a18" stop-opacity="0.9"/><stop offset="0.5" stop-color="#6a4530" stop-opacity="0.55"/><stop offset="1" stop-color="#8a6a50" stop-opacity="0"/></radialGradient></defs>
<g clip-path="url(#imc)">
<rect width="92" height="52" fill="#1c110b"/>
<path d="M0 31.5L92 42V52H0Z" fill="#8c5530"/>
<path d="M0 41L30 45L30 52H0Z" fill="#dcd8d0"/>
<path d="M54 0H92V17Q76 22 66 16Q58 10 54 0Z" fill="#e4dcc8"/>
<path d="M54 0H92V7Q76 10 58 4Z" fill="#f1ece0"/>
<path d="M68 32L71 52H74L71.5 31Z" fill="#8a8478" opacity=".6"/>
<g transform="rotate(9 40 18)">
<path d="M4 18L29 56H46L76 18Z" fill="#c6c0b1"/>
<ellipse cx="40" cy="18" rx="36.5" ry="15.5" fill="#d3cec4"/>
<ellipse cx="40" cy="19" rx="32" ry="12.5" fill="#f3eee2"/>
</g>
<ellipse cx="41" cy="22.5" rx="11" ry="6.5" fill="url(#spk)" opacity=".75"/><rect x="49.2" y="20.3" width="1.2" height="1.2" fill="#6e4a33"/><rect x="38.2" y="22.4" width="0.8" height="0.8" fill="#5b3822"/><rect x="38.9" y="21.5" width="0.8" height="0.8" fill="#4a2c1a"/><rect x="33.4" y="23.9" width="0.8" height="0.8" fill="#4a2c1a"/><rect x="30.8" y="16.4" width="1.2" height="1.2" fill="#6e4a33"/><rect x="38.8" y="20.8" width="0.8" height="0.8" fill="#7a5a44"/><rect x="49.5" y="24.3" width="0.8" height="0.8" fill="#5b3822"/><rect x="40.3" y="22.2" width="1.2" height="1.2" fill="#3a2214"/><rect x="27.7" y="21.6" width="1.0" height="1.0" fill="#6e4a33"/><rect x="46.3" y="22.6" width="0.6" height="0.6" fill="#6e4a33"/><rect x="36.9" y="21.8" width="0.6" height="0.6" fill="#3a2214"/><rect x="38.5" y="25.6" width="0.8" height="0.8" fill="#7a5a44"/><rect x="41.1" y="22.1" width="1.2" height="1.2" fill="#4a2c1a"/><rect x="42.6" y="21.3" width="1.2" height="1.2" fill="#4a2c1a"/><rect x="55.0" y="22.5" width="0.8" height="0.8" fill="#4a2c1a"/><rect x="37.3" y="22.9" width="1.2" height="1.2" fill="#6e4a33"/><rect x="42.7" y="17.5" width="1.0" height="1.0" fill="#3a2214"/><rect x="45.0" y="23.8" width="1.0" height="1.0" fill="#4a2c1a"/><rect x="50.1" y="26.9" width="0.8" height="0.8" fill="#4a2c1a"/><rect x="43.8" y="22.6" width="1.2" height="1.2" fill="#6e4a33"/><rect x="37.0" y="23.2" width="0.8" height="0.8" fill="#5b3822"/><rect x="33.5" y="24.7" width="1.2" height="1.2" fill="#4a2c1a"/><rect x="59.0" y="22.5" width="1.0" height="1.0" fill="#4a2c1a"/><rect x="44.4" y="29.7" width="1.2" height="1.2" fill="#7a5a44"/><rect x="43.2" y="22.4" width="0.8" height="0.8" fill="#6e4a33"/><rect x="40.9" y="23.9" width="1.0" height="1.0" fill="#3a2214"/><rect x="41.6" y="23.6" width="0.8" height="0.8" fill="#4a2c1a"/><rect x="39.4" y="21.9" width="1.0" height="1.0" fill="#7a5a44"/><rect x="22.9" y="23.5" width="0.8" height="0.8" fill="#6e4a33"/><rect x="43.3" y="25.2" width="0.8" height="0.8" fill="#3a2214"/><rect x="41.0" y="28.7" width="0.8" height="0.8" fill="#5b3822"/><rect x="40.5" y="18.5" width="0.8" height="0.8" fill="#6e4a33"/><rect x="34.4" y="24.4" width="0.6" height="0.6" fill="#4a2c1a"/><rect x="47.7" y="23.4" width="1.0" height="1.0" fill="#5b3822"/><rect x="40.6" y="22.6" width="1.2" height="1.2" fill="#3a2214"/><rect x="33.6" y="22.0" width="0.6" height="0.6" fill="#5b3822"/><rect x="41.8" y="21.9" width="0.6" height="0.6" fill="#3a2214"/><rect x="43.2" y="27.4" width="0.8" height="0.8" fill="#4a2c1a"/><rect x="41.0" y="26.2" width="0.6" height="0.6" fill="#5b3822"/><rect x="40.4" y="24.2" width="0.8" height="0.8" fill="#4a2c1a"/><rect x="51.2" y="21.8" width="0.8" height="0.8" fill="#7a5a44"/><rect x="52.7" y="23.9" width="0.6" height="0.6" fill="#6e4a33"/><rect x="50.6" y="21.3" width="0.6" height="0.6" fill="#7a5a44"/><rect x="36.9" y="20.0" width="1.2" height="1.2" fill="#4a2c1a"/><rect x="41.8" y="22.5" width="0.6" height="0.6" fill="#6e4a33"/><rect x="34.7" y="21.5" width="0.6" height="0.6" fill="#5b3822"/><rect x="38.3" y="24.4" width="1.2" height="1.2" fill="#4a2c1a"/><rect x="52.1" y="16.3" width="1.2" height="1.2" fill="#4a2c1a"/><rect x="36.5" y="20.1" width="1.2" height="1.2" fill="#6e4a33"/><rect x="34.6" y="20.5" width="0.6" height="0.6" fill="#4a2c1a"/><rect x="40.9" y="24.2" width="1.2" height="1.2" fill="#3a2214"/><rect x="39.5" y="23.2" width="1.2" height="1.2" fill="#6e4a33"/><rect x="32.0" y="21.9" width="0.6" height="0.6" fill="#3a2214"/><rect x="39.2" y="21.8" width="1.2" height="1.2" fill="#4a2c1a"/><rect x="39.6" y="22.5" width="1.2" height="1.2" fill="#3a2214"/><rect x="50.2" y="18.8" width="1.0" height="1.0" fill="#3a2214"/><rect x="34.6" y="22.1" width="1.0" height="1.0" fill="#6e4a33"/><rect x="32.9" y="22.5" width="0.8" height="0.8" fill="#3a2214"/><rect x="37.9" y="20.6" width="0.8" height="0.8" fill="#5b3822"/><rect x="38.6" y="23.6" width="1.0" height="1.0" fill="#5b3822"/><rect x="44.0" y="19.9" width="0.6" height="0.6" fill="#4a2c1a"/><rect x="47.3" y="21.4" width="1.0" height="1.0" fill="#5b3822"/><rect x="46.7" y="21.0" width="1.2" height="1.2" fill="#6e4a33"/><rect x="37.1" y="20.4" width="1.2" height="1.2" fill="#3a2214"/><rect x="38.9" y="21.4" width="1.0" height="1.0" fill="#4a2c1a"/><rect x="47.7" y="15.9" width="1.0" height="1.0" fill="#7a5a44"/><rect x="30.7" y="19.9" width="1.0" height="1.0" fill="#7a5a44"/><rect x="44.0" y="22.7" width="0.8" height="0.8" fill="#6e4a33"/><rect x="41.8" y="21.7" width="0.8" height="0.8" fill="#5b3822"/><rect x="41.1" y="22.3" width="0.6" height="0.6" fill="#6e4a33"/><rect x="36.4" y="19.5" width="1.0" height="1.0" fill="#4a2c1a"/><rect x="38.6" y="19.6" width="0.8" height="0.8" fill="#6e4a33"/><rect x="41.0" y="22.3" width="0.6" height="0.6" fill="#5b3822"/><rect x="42.7" y="28.8" width="1.0" height="1.0" fill="#7a5a44"/><rect x="38.8" y="21.5" width="0.8" height="0.8" fill="#6e4a33"/><rect x="46.0" y="18.8" width="0.8" height="0.8" fill="#4a2c1a"/><rect x="30.8" y="27.1" width="1.2" height="1.2" fill="#6e4a33"/><rect x="43.8" y="26.8" width="0.6" height="0.6" fill="#6e4a33"/><rect x="30.6" y="22.4" width="1.0" height="1.0" fill="#6e4a33"/><rect x="39.4" y="24.1" width="0.8" height="0.8" fill="#4a2c1a"/><rect x="39.5" y="21.5" width="0.6" height="0.6" fill="#5b3822"/><rect x="41.7" y="29.8" width="1.2" height="1.2" fill="#4a2c1a"/><rect x="43.3" y="17.7" width="1.0" height="1.0" fill="#3a2214"/><rect x="42.1" y="22.1" width="0.6" height="0.6" fill="#3a2214"/><rect x="39.9" y="23.4" width="1.2" height="1.2" fill="#3a2214"/><rect x="40.9" y="22.5" width="0.6" height="0.6" fill="#5b3822"/><rect x="41.3" y="22.0" width="0.8" height="0.8" fill="#7a5a44"/><rect x="39.7" y="23.7" width="0.8" height="0.8" fill="#6e4a33"/><rect x="40.1" y="19.7" width="1.2" height="1.2" fill="#6e4a33"/><rect x="34.6" y="20.7" width="0.6" height="0.6" fill="#5b3822"/><rect x="45.3" y="18.4" width="0.8" height="0.8" fill="#7a5a44"/><rect x="37.5" y="22.3" width="1.0" height="1.0" fill="#3a2214"/><rect x="47.1" y="19.1" width="0.8" height="0.8" fill="#3a2214"/><rect x="50.7" y="15.4" width="1.0" height="1.0" fill="#7a5a44"/><rect x="46.8" y="25.2" width="0.6" height="0.6" fill="#7a5a44"/><rect x="40.9" y="22.5" width="0.6" height="0.6" fill="#7a5a44"/><rect x="49.1" y="22.2" width="0.6" height="0.6" fill="#6e4a33"/><rect x="44.9" y="23.9" width="0.8" height="0.8" fill="#4a2c1a"/><rect x="47.6" y="20.6" width="1.2" height="1.2" fill="#3a2214"/><rect x="41.1" y="24.4" width="1.2" height="1.2" fill="#5b3822"/><rect x="48.9" y="20.7" width="1.2" height="1.2" fill="#7a5a44"/><rect x="35.4" y="29.1" width="0.8" height="0.8" fill="#6e4a33"/><rect x="49.7" y="27.4" width="0.6" height="0.6" fill="#4a2c1a"/><rect x="45.0" y="28.3" width="0.8" height="0.8" fill="#4a2c1a"/><rect x="39.4" y="23.6" width="1.2" height="1.2" fill="#4a2c1a"/><rect x="34.9" y="22.5" width="0.6" height="0.6" fill="#7a5a44"/><rect x="38.4" y="18.2" width="1.2" height="1.2" fill="#4a2c1a"/><rect x="35.1" y="25.6" width="1.2" height="1.2" fill="#7a5a44"/><rect x="45.6" y="19.7" width="0.8" height="0.8" fill="#7a5a44"/><rect x="42.3" y="25.7" width="0.8" height="0.8" fill="#5b3822"/><rect x="35.8" y="26.5" width="0.8" height="0.8" fill="#3a2214"/><rect x="36.7" y="20.8" width="0.8" height="0.8" fill="#5b3822"/><rect x="41.7" y="22.8" width="0.8" height="0.8" fill="#5b3822"/><rect x="40.3" y="19.9" width="1.0" height="1.0" fill="#6e4a33"/><rect x="30.8" y="25.4" width="0.8" height="0.8" fill="#5b3822"/><rect x="34.4" y="25.0" width="0.6" height="0.6" fill="#4a2c1a"/><rect x="43.9" y="21.5" width="1.0" height="1.0" fill="#4a2c1a"/><rect x="38.0" y="17.0" width="1.0" height="1.0" fill="#7a5a44"/><rect x="45.6" y="15.3" width="1.2" height="1.2" fill="#4a2c1a"/><rect x="41.1" y="22.5" width="1.2" height="1.2" fill="#5b3822"/><rect x="41.6" y="23.1" width="0.8" height="0.8" fill="#3a2214"/><rect x="44.1" y="21.7" width="0.6" height="0.6" fill="#7a5a44"/><rect x="24.4" y="24.6" width="0.6" height="0.6" fill="#3a2214"/><rect x="35.6" y="24.9" width="1.2" height="1.2" fill="#7a5a44"/><rect x="38.8" y="23.7" width="0.6" height="0.6" fill="#5b3822"/><rect x="42.7" y="24.5" width="1.2" height="1.2" fill="#3a2214"/><rect x="41.2" y="22.8" width="0.8" height="0.8" fill="#4a2c1a"/><rect x="33.4" y="22.2" width="0.6" height="0.6" fill="#3a2214"/><rect x="38.0" y="17.1" width="1.2" height="1.2" fill="#7a5a44"/><rect x="34.2" y="19.9" width="1.0" height="1.0" fill="#3a2214"/><rect x="41.0" y="22.1" width="0.8" height="0.8" fill="#6e4a33"/><rect x="43.5" y="24.0" width="1.0" height="1.0" fill="#7a5a44"/><rect x="41.4" y="20.2" width="1.2" height="1.2" fill="#5b3822"/><rect x="38.9" y="16.2" width="0.6" height="0.6" fill="#3a2214"/><rect x="41.8" y="22.1" width="0.6" height="0.6" fill="#5b3822"/><rect x="40.5" y="24.2" width="1.0" height="1.0" fill="#3a2214"/><rect x="41.7" y="23.3" width="0.6" height="0.6" fill="#6e4a33"/><rect x="33.5" y="22.1" width="1.2" height="1.2" fill="#5b3822"/><rect x="44.8" y="22.2" width="0.6" height="0.6" fill="#4a2c1a"/><rect x="31.9" y="18.2" width="0.8" height="0.8" fill="#3a2214"/><rect x="41.6" y="18.1" width="1.2" height="1.2" fill="#4a2c1a"/><rect x="43.5" y="23.5" width="1.0" height="1.0" fill="#3a2214"/><rect x="33.1" y="22.3" width="0.6" height="0.6" fill="#6e4a33"/><rect x="42.9" y="19.9" width="0.6" height="0.6" fill="#7a5a44"/><rect x="50.9" y="24.0" width="0.8" height="0.8" fill="#6e4a33"/><rect x="33.8" y="23.2" width="0.8" height="0.8" fill="#6e4a33"/><rect x="32.2" y="24.7" width="1.2" height="1.2" fill="#6e4a33"/><rect x="40.4" y="23.9" width="1.2" height="1.2" fill="#7a5a44"/><rect x="37.5" y="22.7" width="1.0" height="1.0" fill="#7a5a44"/><rect x="48.7" y="20.6" width="1.0" height="1.0" fill="#4a2c1a"/><rect x="46.4" y="23.3" width="0.8" height="0.8" fill="#6e4a33"/><rect x="41.0" y="22.2" width="1.2" height="1.2" fill="#4a2c1a"/><rect x="50.5" y="24.1" width="1.0" height="1.0" fill="#4a2c1a"/><rect x="43.2" y="18.7" width="0.8" height="0.8" fill="#6e4a33"/><rect x="41.0" y="21.9" width="0.6" height="0.6" fill="#7a5a44"/><rect x="45.6" y="24.2" width="1.2" height="1.2" fill="#5b3822"/><rect x="30.1" y="18.1" width="0.6" height="0.6" fill="#4a2c1a"/><rect x="39.7" y="21.8" width="1.2" height="1.2" fill="#4a2c1a"/><rect x="40.3" y="22.4" width="0.6" height="0.6" fill="#3a2214"/><rect x="38.8" y="22.9" width="1.2" height="1.2" fill="#6e4a33"/><rect x="37.4" y="18.3" width="1.0" height="1.0" fill="#7a5a44"/><rect x="43.5" y="19.4" width="0.8" height="0.8" fill="#3a2214"/><rect x="41.4" y="22.7" width="1.0" height="1.0" fill="#7a5a44"/><rect x="37.1" y="20.4" width="1.0" height="1.0" fill="#3a2214"/><rect x="39.6" y="22.2" width="0.8" height="0.8" fill="#3a2214"/><rect x="41.2" y="16.5" width="0.8" height="0.8" fill="#5b3822"/><rect x="44.6" y="28.0" width="0.6" height="0.6" fill="#4a2c1a"/><rect x="41.1" y="22.5" width="1.0" height="1.0" fill="#6e4a33"/><rect x="41.4" y="23.6" width="1.0" height="1.0" fill="#4a2c1a"/><rect x="41.0" y="22.3" width="0.8" height="0.8" fill="#7a5a44"/><rect x="39.0" y="22.6" width="1.0" height="1.0" fill="#5b3822"/><rect x="44.1" y="24.3" width="0.6" height="0.6" fill="#4a2c1a"/><rect x="34.0" y="23.8" width="0.8" height="0.8" fill="#6e4a33"/><rect x="42.9" y="19.9" width="1.0" height="1.0" fill="#5b3822"/><rect x="39.5" y="21.3" width="1.0" height="1.0" fill="#3a2214"/><rect x="51.4" y="19.5" width="1.2" height="1.2" fill="#3a2214"/><rect x="37.7" y="21.5" width="1.2" height="1.2" fill="#3a2214"/><rect x="38.5" y="21.9" width="1.2" height="1.2" fill="#6e4a33"/><rect x="40.6" y="23.3" width="0.6" height="0.6" fill="#4a2c1a"/><rect x="36.2" y="20.5" width="1.0" height="1.0" fill="#6e4a33"/><rect x="38.6" y="14.4" width="1.0" height="1.0" fill="#3a2214"/><rect x="38.9" y="20.8" width="1.0" height="1.0" fill="#3a2214"/><rect x="44.0" y="21.4" width="1.0" height="1.0" fill="#6e4a33"/><rect x="55.2" y="19.5" width="1.0" height="1.0" fill="#6e4a33"/><rect x="34.0" y="21.8" width="1.0" height="1.0" fill="#6e4a33"/><rect x="43.9" y="21.8" width="0.8" height="0.8" fill="#4a2c1a"/><rect x="36.5" y="25.3" width="1.0" height="1.0" fill="#4a2c1a"/><rect x="37.3" y="24.2" width="0.8" height="0.8" fill="#7a5a44"/><rect x="37.1" y="24.7" width="1.2" height="1.2" fill="#7a5a44"/><rect x="43.5" y="25.2" width="0.6" height="0.6" fill="#6e4a33"/><rect x="47.1" y="19.5" width="1.0" height="1.0" fill="#4a2c1a"/><rect x="41.3" y="22.7" width="1.0" height="1.0" fill="#4a2c1a"/><rect x="39.5" y="21.4" width="1.2" height="1.2" fill="#4a2c1a"/><rect x="35.7" y="21.7" width="1.0" height="1.0" fill="#4a2c1a"/><rect x="40.5" y="24.2" width="0.6" height="0.6" fill="#3a2214"/><rect x="46.7" y="26.3" width="1.2" height="1.2" fill="#5b3822"/><rect x="39.7" y="19.7" width="1.2" height="1.2" fill="#7a5a44"/><rect x="38.4" y="24.4" width="1.0" height="1.0" fill="#5b3822"/><rect x="33.9" y="22.7" width="0.6" height="0.6" fill="#7a5a44"/><rect x="44.1" y="19.4" width="1.0" height="1.0" fill="#4a2c1a"/><rect x="42.4" y="20.5" width="0.6" height="0.6" fill="#6e4a33"/><rect x="30.8" y="21.7" width="0.6" height="0.6" fill="#4a2c1a"/><rect x="38.5" y="23.2" width="1.2" height="1.2" fill="#5b3822"/><rect x="40.9" y="22.5" width="0.8" height="0.8" fill="#3a2214"/><rect x="42.3" y="24.8" width="1.2" height="1.2" fill="#7a5a44"/><rect x="45.8" y="23.5" width="1.0" height="1.0" fill="#4a2c1a"/><rect x="34.7" y="32.1" width="0.8" height="0.8" fill="#5b3822"/><rect x="51.6" y="23.1" width="1.2" height="1.2" fill="#4a2c1a"/><rect x="38.5" y="25.7" width="0.8" height="0.8" fill="#5b3822"/><rect x="35.9" y="20.5" width="1.2" height="1.2" fill="#7a5a44"/><rect x="33.3" y="22.3" width="1.2" height="1.2" fill="#5b3822"/><rect x="46.1" y="20.8" width="1.0" height="1.0" fill="#7a5a44"/><rect x="45.4" y="21.6" width="1.2" height="1.2" fill="#3a2214"/><rect x="48.3" y="21.4" width="0.6" height="0.6" fill="#6e4a33"/><rect x="41.5" y="22.2" width="1.2" height="1.2" fill="#4a2c1a"/><rect x="41.2" y="22.1" width="1.0" height="1.0" fill="#4a2c1a"/><rect x="38.8" y="20.7" width="0.8" height="0.8" fill="#4a2c1a"/><rect x="30.1" y="24.4" width="0.8" height="0.8" fill="#6e4a33"/><rect x="31.9" y="18.7" width="0.8" height="0.8" fill="#6e4a33"/><rect x="40.8" y="24.4" width="0.8" height="0.8" fill="#7a5a44"/><rect x="40.4" y="25.4" width="0.6" height="0.6" fill="#5b3822"/><rect x="42.2" y="24.7" width="0.8" height="0.8" fill="#5b3822"/><rect x="42.8" y="23.0" width="1.0" height="1.0" fill="#7a5a44"/><rect x="40.3" y="22.5" width="1.2" height="1.2" fill="#4a2c1a"/><rect x="44.2" y="22.0" width="1.0" height="1.0" fill="#4a2c1a"/><rect x="42.7" y="22.0" width="0.6" height="0.6" fill="#6e4a33"/><rect x="43.0" y="26.4" width="1.2" height="1.2" fill="#7a5a44"/><rect x="58.7" y="20.3" width="1.0" height="1.0" fill="#3a2214"/><rect x="40.5" y="22.7" width="1.0" height="1.0" fill="#6e4a33"/><rect x="42.2" y="22.8" width="0.8" height="0.8" fill="#4a2c1a"/><rect x="39.8" y="21.4" width="1.2" height="1.2" fill="#4a2c1a"/><rect x="40.5" y="22.7" width="1.2" height="1.2" fill="#5b3822"/><rect x="40.7" y="23.0" width="0.6" height="0.6" fill="#6e4a33"/><rect x="42.1" y="21.6" width="0.8" height="0.8" fill="#7a5a44"/><rect x="49.4" y="28.9" width="1.2" height="1.2" fill="#7a5a44"/><rect x="41.0" y="22.5" width="0.6" height="0.6" fill="#3a2214"/><rect x="48.0" y="31.7" width="1.2" height="1.2" fill="#4a2c1a"/><rect x="33.0" y="20.7" width="1.0" height="1.0" fill="#6e4a33"/><rect x="48.4" y="15.0" width="0.6" height="0.6" fill="#4a2c1a"/><rect x="40.1" y="21.5" width="0.8" height="0.8" fill="#5b3822"/><rect x="41.9" y="23.8" width="0.6" height="0.6" fill="#6e4a33"/><rect x="41.4" y="23.9" width="0.8" height="0.8" fill="#4a2c1a"/><rect x="39.4" y="22.9" width="0.6" height="0.6" fill="#3a2214"/><rect x="34.1" y="22.2" width="0.8" height="0.8" fill="#5b3822"/><rect x="42.6" y="20.7" width="1.2" height="1.2" fill="#6e4a33"/><rect x="44.8" y="22.7" width="1.2" height="1.2" fill="#7a5a44"/><rect x="38.9" y="19.1" width="0.8" height="0.8" fill="#7a5a44"/><rect x="43.1" y="25.3" width="1.0" height="1.0" fill="#6e4a33"/><rect x="41.9" y="22.9" width="1.2" height="1.2" fill="#5b3822"/><rect x="47.0" y="16.2" width="0.8" height="0.8" fill="#3a2214"/><rect x="41.1" y="22.1" width="1.0" height="1.0" fill="#7a5a44"/><rect x="40.0" y="22.5" width="0.8" height="0.8" fill="#7a5a44"/><rect x="51.3" y="22.4" width="0.8" height="0.8" fill="#7a5a44"/><rect x="44.2" y="27.5" width="0.6" height="0.6" fill="#5b3822"/><rect x="41.1" y="24.4" width="1.2" height="1.2" fill="#3a2214"/><rect x="35.7" y="25.9" width="1.2" height="1.2" fill="#4a2c1a"/><rect x="26.5" y="24.9" width="0.8" height="0.8" fill="#5b3822"/><rect x="33.8" y="21.0" width="1.0" height="1.0" fill="#5b3822"/><rect x="45.5" y="21.0" width="1.0" height="1.0" fill="#7a5a44"/>
</g>
</svg>
<div class="t" style="left:952px;top:426.3px;font-size:11.5px;color:#1a1a1a;font-weight:normal;">ALWAZONSALE</div>
<div class="t" style="left:952px;top:441.6px;font-size:11.5px;color:#1a1a1a;font-weight:normal;">15 Pearlman DR</div>
<div class="t" style="left:952px;top:456.9px;font-size:11.5px;color:#1a1a1a;font-weight:normal;">Spring Valley NY 10977 US</div>
<div class="t" style="left:1151px;top:426.3px;font-size:11.5px;color:#1a1a1a;font-weight:normal;"><b>P:</b> 1234567890</div>
<div class="t" style="left:1151px;top:441.6px;font-size:11.5px;color:#1a1a1a;font-weight:normal;"><b>E:</b> office@squid.com</div>
<div class="t" style="left:1151px;top:456.9px;font-size:11.5px;color:#1a1a1a;font-weight:normal;"><b>F:</b> 718-215-1111</div>
<div class="a" style="left:583px;top:481px;width:758px;height:1px;background:#c8c8c8;"></div>
<div class="a" style="left:583px;top:503px;width:758px;height:1px;background:#c8c8c8;"></div>
<div class="t" style="left:583px;top:487.3px;font-size:11.5px;color:#111;font-weight:normal;"><b>Pick Order PC-0010713</b></div>
<div class="t" style="left:766px;top:487.3px;font-size:11.5px;color:#111;font-weight:normal;"><b>Customer:</b> Karinatest</div>
<div class="t" style="left:1281px;top:487.3px;font-size:11.5px;color:#111;font-weight:normal;">Page 1 of 1</div>
<svg style="left:0;top:0" width="1" height="1"><rect x="585" y="521" width="4" height="29" fill="#000"/><rect x="590" y="521" width="2" height="29" fill="#000"/><rect x="600" y="521" width="2" height="29" fill="#000"/><rect x="606" y="521" width="4" height="29" fill="#000"/><rect x="613" y="521" width="6" height="29" fill="#000"/><rect x="621" y="521" width="2" height="29" fill="#000"/><rect x="627" y="521" width="4" height="29" fill="#000"/><rect x="635" y="521" width="5" height="29" fill="#000"/><rect x="642" y="521" width="2" height="29" fill="#000"/><rect x="648" y="521" width="2" height="29" fill="#000"/><rect x="654" y="521" width="6" height="29" fill="#000"/><rect x="663" y="521" width="4" height="29" fill="#000"/><rect x="669" y="521" width="2" height="29" fill="#000"/><rect x="675" y="521" width="6" height="29" fill="#000"/><rect x="683" y="521" width="3" height="29" fill="#000"/><rect x="690" y="521" width="6" height="29" fill="#000"/><rect x="698" y="521" width="4" height="29" fill="#000"/><rect x="704" y="521" width="5" height="29" fill="#000"/><rect x="711" y="521" width="2" height="29" fill="#000"/><rect x="717" y="521" width="6" height="29" fill="#000"/><rect x="727" y="521" width="4" height="29" fill="#000"/><rect x="733" y="521" width="3" height="29" fill="#000"/><rect x="740" y="521" width="2" height="29" fill="#000"/><rect x="744" y="521" width="6" height="29" fill="#000"/><rect x="754" y="521" width="2" height="29" fill="#000"/><rect x="759" y="521" width="6" height="29" fill="#000"/><rect x="767" y="521" width="4" height="29" fill="#000"/><rect x="775" y="521" width="4" height="29" fill="#000"/><rect x="784" y="521" width="6" height="29" fill="#000"/><rect x="792" y="521" width="2" height="29" fill="#000"/><rect x="796" y="521" width="4" height="29" fill="#000"/></svg>
<div class="t" style="left:583px;top:560.5px;font-size:19.5px;color:#000;font-weight:bold;">Pick Order PC-0010713</div>
<div class="a" style="left:583px;top:588px;width:377px;height:60px;background:#fff;border:1px solid #c4c4c4"></div>
<div class="a" style="left:584px;top:589px;width:375px;height:26px;background:#f4f4f4;"></div>
<div class="t" style="left:591px;top:596.8px;font-size:12px;color:#111;font-weight:bold;">Ship Order Number</div>
<div class="t" style="left:591px;top:625.3px;font-size:11.5px;color:#222;font-weight:normal;">SHO-0048296</div>
<div class="a" style="left:986px;top:522px;width:355px;height:127px;background:#fff;border:1px solid #c4c4c4"></div>
<div class="a" style="left:987px;top:523px;width:353px;height:27px;background:#f4f4f4;"></div>
<div class="t" style="left:994px;top:530.8px;font-size:12px;color:#111;font-weight:bold;">Customer</div>
<div class="t" style="left:994px;top:557.8px;font-size:12px;color:#111;font-weight:normal;">Karinatest</div>
<div class="t" style="left:994px;top:571.8px;font-size:12px;color:#111;font-weight:normal;">51 West 51st Street</div>
<div class="t" style="left:994px;top:585.8px;font-size:12px;color:#111;font-weight:normal;">New York, NY, 10019, US,</div>
<div class="t" style="left:994px;top:599.8px;font-size:12px;color:#111;font-weight:normal;">tel: 58487768</div>
<div class="a" style="left:583px;top:666px;width:758px;height:61px;background:#fff;border:1px solid #c4c4c4"></div>
<div class="a" style="left:584px;top:667px;width:756px;height:26px;background:#f4f4f4;"></div>
<div class="a" style="left:771px;top:667px;width:1px;height:60px;background:#c4c4c4;"></div>
<div class="a" style="left:961px;top:667px;width:1px;height:60px;background:#c4c4c4;"></div>
<div class="a" style="left:1151px;top:667px;width:1px;height:60px;background:#c4c4c4;"></div>
<div class="t" style="left:591px;top:674.8px;font-size:12px;color:#111;font-weight:bold;">Date</div>
<div class="t" style="left:779px;top:674.8px;font-size:12px;color:#111;font-weight:bold;">Picker</div>
<div class="t" style="left:969px;top:674.8px;font-size:12px;color:#111;font-weight:bold;">Truck Type</div>
<div class="t" style="left:1159px;top:674.8px;font-size:12px;color:#111;font-weight:bold;">Zone</div>
<div class="t" style="left:591px;top:704.3px;font-size:11.5px;color:#222;font-weight:normal;">11/01/2021</div>
<div class="t" style="left:969px;top:704.3px;font-size:11.5px;color:#222;font-weight:normal;">1001 Red Truck</div>
<div class="t" style="left:1159px;top:704.3px;font-size:11.5px;color:#222;font-weight:normal;">New Jersey</div>
<div class="t" style="left:583px;top:748.3px;font-size:11.5px;color:#333;font-weight:bold;">ITEMS</div>
<div class="a" style="left:583px;top:769px;width:758px;height:41px;background:#004c86;"></div>
<div class="a" style="left:583px;top:810px;width:758px;height:35px;background:#fff;border:1px solid #d5d5d5;border-top:none"></div>
<div class="a" style="left:584px;top:810px;width:30px;height:34px;background:#f4f4f4;"></div>
<div class="a" style="left:614px;top:769px;width:1px;height:41px;background:#ffffff;"></div>
<div class="a" style="left:614px;top:810px;width:1px;height:34px;background:#d5d5d5;"></div>
<div class="a" style="left:804px;top:769px;width:1px;height:41px;background:#ffffff;"></div>
<div class="a" style="left:804px;top:810px;width:1px;height:34px;background:#d5d5d5;"></div>
<div class="a" style="left:890px;top:769px;width:1px;height:41px;background:#ffffff;"></div>
<div class="a" style="left:890px;top:810px;width:1px;height:34px;background:#d5d5d5;"></div>
<div class="a" style="left:1018px;top:769px;width:1px;height:41px;background:#ffffff;"></div>
<div class="a" style="left:1018px;top:810px;width:1px;height:34px;background:#d5d5d5;"></div>
<div class="a" style="left:1107px;top:769px;width:1px;height:41px;background:#ffffff;"></div>
<div class="a" style="left:1107px;top:810px;width:1px;height:34px;background:#d5d5d5;"></div>
<div class="a" style="left:1186px;top:769px;width:1px;height:41px;background:#ffffff;"></div>
<div class="a" style="left:1186px;top:810px;width:1px;height:34px;background:#d5d5d5;"></div>
<div class="a" style="left:1234px;top:769px;width:1px;height:41px;background:#ffffff;"></div>
<div class="a" style="left:1234px;top:810px;width:1px;height:34px;background:#d5d5d5;"></div>
<div class="t" style="left:596px;top:783.8px;font-size:12px;color:#ffffff;font-weight:bold;">#</div>
<div class="t" style="left:623px;top:783.8px;font-size:12px;color:#ffffff;font-weight:bold;">Description</div>
<div class="t" style="left:812px;top:783.8px;font-size:12px;color:#ffffff;font-weight:bold;">Location</div>
<div class="t" style="left:898px;top:783.8px;font-size:12px;color:#ffffff;font-weight:bold;">Order Qty</div>
<div class="t" style="left:1114px;top:783.8px;font-size:12px;color:#ffffff;font-weight:bold;">Avail. Qty</div>
<div class="t" style="left:1194px;top:783.8px;font-size:12px;color:#ffffff;font-weight:bold;">UOM</div>
<div class="t" style="left:1242px;top:783.8px;font-size:12px;color:#ffffff;font-weight:bold;">Picked Qty</div>
<div class="t" style="left:1026px;top:775.8px;font-size:12px;color:#ffffff;font-weight:bold;">Pick Order</div>
<div class="t" style="left:1026px;top:790.8px;font-size:12px;color:#ffffff;font-weight:bold;">Qty</div>
<div class="t" style="left:596px;top:821.3px;font-size:11.5px;color:#222;font-weight:bold;">1</div>
<div class="t" style="left:623px;top:821.3px;font-size:11.5px;color:#222;font-weight:normal;">qewr</div>
<div class="t" style="left:812px;top:821.3px;font-size:11.5px;color:#222;font-weight:normal;">pick location</div>
<div class="t" style="left:900px;top:821.3px;font-size:11.5px;color:#222;font-weight:normal;">1</div>
<div class="t" style="left:1026px;top:821.3px;font-size:11.5px;color:#222;font-weight:normal;">1</div>
<div class="t" style="left:1114px;top:821.3px;font-size:11.5px;color:#222;font-weight:normal;">1</div>
<div class="t" style="left:1195px;top:821.3px;font-size:11.5px;color:#222;font-weight:normal;">cased</div>
<div class="a" style="left:583px;top:405px;width:1px;height:635px;background:repeating-linear-gradient(to bottom,#c6c6c6 0 6px,transparent 6px 10px);"></div>
<div class="a" style="left:1340px;top:405px;width:1px;height:635px;background:repeating-linear-gradient(to bottom,#c6c6c6 0 6px,transparent 6px 10px);"></div>
<div class="a" style="left:555px;top:423px;width:814px;height:1px;background:repeating-linear-gradient(to right,#c6c6c6 0 6px,transparent 6px 10px);"></div>
<div class="a" style="left:1840px;top:116px;width:75px;height:40px;background:#ffffff;"></div>
<div class="a" style="left:1840px;top:156px;width:75px;height:23px;background:#f0f0f0;border:1px solid #c9c9c9;border-right:none"></div>
<div class="t" style="left:1848px;top:161.8px;font-size:12px;color:#222;font-weight:normal;">Print report</div>
<div class="a" style="left:1840px;top:179px;width:75px;height:9px;background:#e4e4e4;"></div>
<div class="a" style="left:1836px;top:112px;width:83px;height:80px;background:transparent;border:4px solid #f65747;box-shadow:2px 2px 3px rgba(0,0,0,.55), inset 3px 3px 3px rgba(0,0,0,.75)"></div>
<div class="a" style="left:1135px;top:641px;width:220px;height:101px;background:transparent;border:4px solid #f65747;box-shadow:2px 2px 3px rgba(0,0,0,.55), inset 2px 2px 3px rgba(0,0,0,.55)"></div>
<svg style="left:1858px;top:131px" width="20" height="18" viewBox="0 0 20 18"><rect x="4" y="0" width="12" height="3.5" fill="#0e5f9e"/><path d="M0 8Q0 4.5 3 4.5H17Q20 4.5 20 8V15H15.5V11H4.5V15H0Z" fill="#0e5f9e"/><rect x="5.5" y="12" width="9" height="6" fill="#0e5f9e"/><rect x="7" y="13" width="6" height="4" fill="#fff"/><circle cx="16.5" cy="7.5" r="1" fill="#fff"/></svg>
<svg style="left:1891px;top:130px" width="19" height="19" viewBox="0 0 19 19"><g fill="#0e5f9e" transform="translate(9.5 9.5)"><circle r="6.8"/><rect x="-2.3" y="-9.5" width="4.6" height="5" rx="0.8" transform="rotate(0)"/><rect x="-2.3" y="-9.5" width="4.6" height="5" rx="0.8" transform="rotate(60)"/><rect x="-2.3" y="-9.5" width="4.6" height="5" rx="0.8" transform="rotate(120)"/><rect x="-2.3" y="-9.5" width="4.6" height="5" rx="0.8" transform="rotate(180)"/><rect x="-2.3" y="-9.5" width="4.6" height="5" rx="0.8" transform="rotate(240)"/><rect x="-2.3" y="-9.5" width="4.6" height="5" rx="0.8" transform="rotate(300)"/></g><circle cx="9.5" cy="9.5" r="3" fill="#fff"/></svg>
</body></html>
